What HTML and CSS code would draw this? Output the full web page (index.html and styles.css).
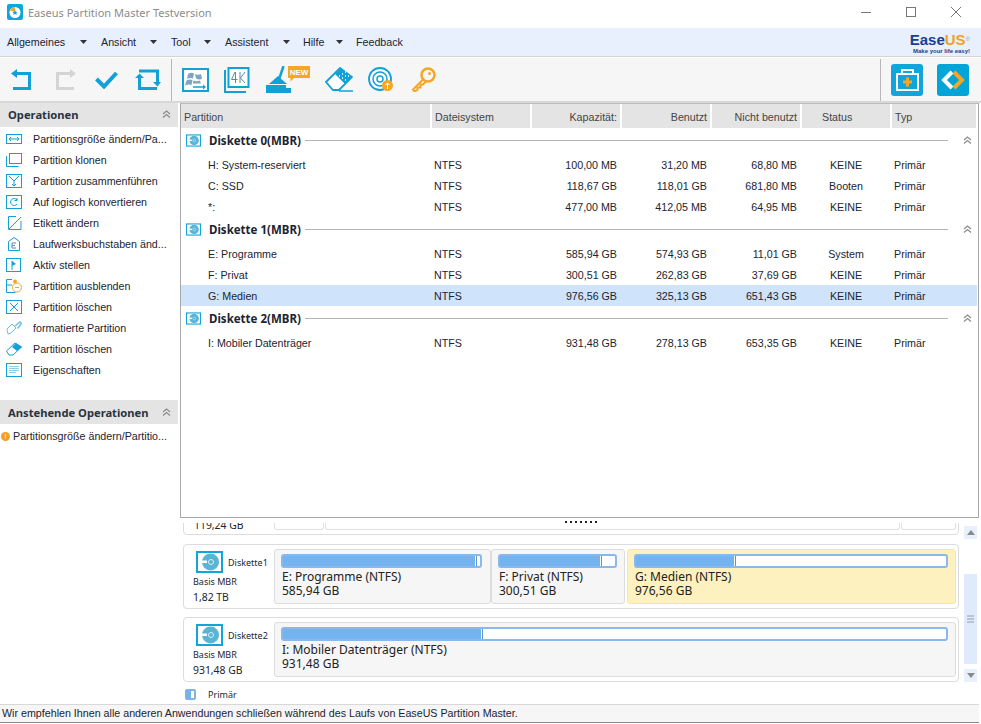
FILE: index.html
```html
<!DOCTYPE html>
<html lang="de">
    <head>
        <meta charset="UTF-8" />
        <title>Easeus Partition Master Testversion</title>
        <link rel="stylesheet" href="styles.css">
    </head>
    <body>
        <svg class="defs" width="0" height="0">
            <symbol id="disk" viewBox="0 0 27 22">
                <rect x="1" y="1" width="25" height="20" fill="#fff" stroke="#12a5dc" stroke-width="2"/>
                <circle cx="14.500" cy="11" r="8.500" fill="#5ab4d6"/>
                <rect x="2" y="9.500" width="9" height="2.500" fill="#fff"/>
                <circle cx="15" cy="11" r="2.500" fill="none" stroke="#d8eef7"/>
            </symbol>
            <symbol id="up2" viewBox="0 0 9 8">
                <path d="M1 4l3.500-3L8 4M1 7.500l3.500-3 3.500 3" fill="none" stroke="#8a8a8a" stroke-width="1.200"/>
            </symbol>
        </svg>

        <!-- Titelleiste -->
        <header class="titlebar">
            <svg class="app-icon" width="16" height="16" viewBox="0 0 16 16">
                <rect width="16" height="16" rx="2" fill="#12a5dc"/>
                <circle cx="8" cy="8.500" r="5.500" fill="#fff"/>
                <path d="M8 3a5.500 5.500 0 0 0-5 3.500L8 8z" fill="#f5a623"/>
                <path d="M8 6l.8 1.700 1.800.2-1.300 1.200.4 1.800L8 10l-1.700.9.4-1.800-1.300-1.200 1.800-.2z" fill="#12a5dc"/>
            </svg>
            <span class="app-title">Easeus Partition Master Testversion</span>
            <div class="win-buttons">
                <svg width="12" height="12" viewBox="0 0 12 12"><path d="M1 6.500h10" stroke="#777" fill="none"/></svg>
                <svg width="12" height="12" viewBox="0 0 12 12"><rect x="1.500" y="1.500" width="9" height="9" stroke="#777" fill="none"/></svg>
                <svg width="12" height="12" viewBox="0 0 12 12"><path d="M1 1l10 10M11 1L1 11" stroke="#777" fill="none"/></svg>
            </div>
        </header>

        <!-- Menue -->
        <nav class="menubar">
            <span class="menu-item m1">Allgemeines</span><i class="caret"></i>
            <span class="menu-item m2">Ansicht</span><i class="caret"></i>
            <span class="menu-item m3">Tool</span><i class="caret"></i>
            <span class="menu-item m4">Assistent</span><i class="caret short"></i>
            <span class="menu-item m5">Hilfe</span><i class="caret short"></i>
            <span class="menu-item">Feedback</span>
            <div class="logo">
                <div class="logo-name">Ease<b>US</b><sup>®</sup></div>
                <div class="logo-sub">Make your life easy!</div>
            </div>
        </nav>

        <!-- Werkzeugleiste -->
        <div class="toolbar">
            <svg class="tool" width="21" height="21" viewBox="0 0 21 21"><path d="M2 19.500h16.500V4.500H6" fill="none" stroke="#12a0d7" stroke-width="3"/><path d="M0 4.500L6 0v9z" fill="#12a0d7"/></svg>
            <svg class="tool t-redo" width="21" height="21" viewBox="0 0 21 21"><path d="M19 19.500H2.500V4.500H15" fill="none" stroke="#d4d4d4" stroke-width="3"/><path d="M21 4.500L15 0v9z" fill="#d4d4d4"/></svg>
            <svg class="tool t-apply" width="23" height="18" viewBox="0 0 23 18"><path d="M1.500 8l7.500 7.500L21.500 2" fill="none" stroke="#12a0d7" stroke-width="4"/></svg>
            <svg class="tool t-reload" width="26" height="21" viewBox="0 0 26 21"><path d="M4.500 7v12.500H22M4 2h18.500v12" fill="none" stroke="#12a0d7" stroke-width="3"/><path d="M0 9l4.500-4.500L9 9zM18 13l4.500 4.500L26 13z" fill="#12a0d7"/></svg>
            <i class="tool-sep"></i>
            <svg class="tool" width="27" height="24" viewBox="0 0 27 24"><rect x="1" y="1" width="25" height="22" fill="#fff" stroke="#12a0d7" stroke-width="2"/><path d="M6 6q3-2 6-.5l-1 5q-3-1-6 .5zM13 6q3 1.500 6 0l1 5q-3 1-6-.5zM4.500 12.500q3-1.500 6-.5l-1 5q-3-1-6.500.5zM11.500 12.500q3 1.500 6.500 0l.8 3h-8z" fill="#7fa5bf"/><path d="M11 19h11" stroke="#12a0d7" stroke-width="1.500"/><path d="M21 16.500l3 2.500-3 2.500z" fill="#12a0d7"/></svg>
            <svg class="tool t-4k" width="26" height="26" viewBox="0 0 26 26"><path d="M1 3v22h21" fill="none" stroke="#12a0d7" stroke-width="2"/><rect x="4.500" y="1" width="20" height="19" fill="#fff" stroke="#12a0d7" stroke-width="2"/><path d="M11 5l-3.500 7.500h6M11.500 5v11M16 5v11M21 5l-4.500 6 4.500 5" fill="none" stroke="#5f88a0"/></svg>
            <svg class="tool t-clean" width="45" height="27" viewBox="0 0 45 27"><path d="M0 19h20v3h5v5H0z" fill="#12a0d7"/><path d="M17.500 0l-4 12" stroke="#12a0d7" stroke-width="2.500"/><path d="M3 18l9-8 9 8z" fill="#12a0d7"/><path d="M22 0h22v12H28l-3.500 3.500V12H22z" fill="#f5a623"/><text x="33" y="9" class="new-text" text-anchor="middle">NEW</text></svg>
            <svg class="tool t-erase" width="28" height="25" viewBox="0 0 28 25"><path d="M1 15L15 1l12 9-13 13H8z" fill="#fff" stroke="#12a0d7" stroke-width="1.800"/><path d="M10 7l6-6 11 9-7 7z" fill="#12a0d7"/><path d="M14 9h1M17 7h1M20 5h1M17 11h1M20 9h1M23 9h1M20 13h1" stroke="#fff" stroke-width="1.500"/><path d="M14 24h14" stroke="#12a0d7" stroke-width="1.500"/></svg>
            <svg class="tool t-disc" width="25" height="25" viewBox="0 0 25 25"><circle cx="12" cy="12" r="11" fill="#fff" stroke="#12a0d7" stroke-width="1.800"/><circle cx="12" cy="12" r="7" fill="none" stroke="#12a0d7" stroke-width="1.500"/><circle cx="12" cy="12" r="3" fill="none" stroke="#12a0d7" stroke-width="1.500"/><circle cx="19.500" cy="18.500" r="5.500" fill="#f5a623"/><path d="M19.500 22v-6M17.500 18l2-2 2 2" stroke="#fff" fill="none"/></svg>
            <svg class="tool t-key" width="25" height="25" viewBox="0 0 25 25"><circle cx="17" cy="8" r="6.500" fill="none" stroke="#f5a623" stroke-width="2.500"/><circle cx="18.500" cy="6.500" r="1.500" fill="#f5a623"/><path d="M12.500 12L2 22.500 3.500 24.500l3-1.500v-2.500h3v-3h2.500l3-3" fill="none" stroke="#f5a623" stroke-width="2"/></svg>
            <i class="tool-sep right"></i>
            <svg class="tool" width="32" height="32" viewBox="0 0 32 32"><rect width="32" height="32" rx="3" fill="#12a5dc"/><rect x="5" y="9" width="23" height="18" fill="#fff"/><rect x="7" y="11" width="19" height="14" fill="#12a5dc"/><path d="M11 9V6h11v3" fill="none" stroke="#fff" stroke-width="2"/><path d="M16.500 13.500v9M12 18h9" stroke="#f5a623" stroke-width="3"/></svg>
            <svg class="tool t-last" width="32" height="32" viewBox="0 0 32 32"><rect width="32" height="32" rx="3" fill="#03a4d8"/><path d="M15 8l-8 8 8 8" fill="none" stroke="#fff" stroke-width="4"/><path d="M17 8l8 8-8 8" fill="none" stroke="#f5a623" stroke-width="4"/></svg>
        </div>

        <div class="main">
            <!-- Seitenleiste -->
            <aside class="sidebar">
                <div class="side-head first"><span>Operationen</span><svg width="9" height="8"><use href="#up2"/></svg></div>
                <ul class="op-list">
                    <li><svg width="16" height="14" viewBox="0 0 16 14"><rect x=".5" y="2.500" width="15" height="9" fill="none" stroke="#12a0d7"/><path d="M3 7h10M5 5L3 7l2 2M11 5l2 2-2 2" fill="none" stroke="#12a0d7"/></svg>Partitionsgröße ändern/Pa...</li>
                    <li><svg width="16" height="14" viewBox="0 0 16 14"><rect x="3.500" y=".5" width="12" height="10" fill="none" stroke="#12a0d7"/><path d="M.5 3v10.500h12" fill="none" stroke="#12a0d7"/></svg>Partition klonen</li>
                    <li><svg width="16" height="14" viewBox="0 0 16 14"><rect x=".5" y=".5" width="15" height="13" fill="none" stroke="#12a0d7"/><path d="M3 2l5 5 5-5M8 7v5M6 10l2 2 2-2" fill="none" stroke="#12a0d7"/></svg>Partition zusammenführen</li>
                    <li><svg width="16" height="14" viewBox="0 0 16 14"><rect x=".5" y=".5" width="15" height="13" fill="none" stroke="#12a0d7"/><path d="M11 9a3.500 3.500 0 1 1 0-4M11 3v2.500H8.500" fill="none" stroke="#12a0d7"/></svg>Auf logisch konvertieren</li>
                    <li><svg width="16" height="14" viewBox="0 0 16 14"><path d="M10 .5H2.500v13h12.500V5M3 13L15 1" fill="none" stroke="#12a0d7"/></svg>Etikett ändern</li>
                    <li><svg width="16" height="14" viewBox="0 0 16 14"><path d="M2.500 13.500v-9L8 .5l5.500 4v9z" fill="none" stroke="#12a0d7"/><path d="M6 6h4M6 6v5h4M6 8.500h3" fill="none" stroke="#5f88a0"/></svg>Laufwerksbuchstaben änd...</li>
                    <li><svg width="16" height="14" viewBox="0 0 16 14"><rect x=".5" y=".5" width="14" height="13" fill="none" stroke="#12a0d7"/><path d="M6 3v9" stroke="#12a0d7"/><path d="M6 3l4 3-4 2z" fill="#12a0d7"/></svg>Aktiv stellen</li>
                    <li><svg width="16" height="14" viewBox="0 0 16 14"><path d="M6 .5H.5v13h9M.5 6H6" fill="none" stroke="#12a0d7"/><circle cx="11" cy="8.500" r="4.500" fill="#fff" stroke="#f5a623"/><path d="M9 8.500h4" stroke="#f5a623"/><circle cx="9" cy="2.500" r="2" fill="#f5a623"/></svg>Partition ausblenden</li>
                    <li><svg width="16" height="14" viewBox="0 0 16 14"><rect x=".5" y=".5" width="15" height="13" fill="none" stroke="#12a0d7"/><path d="M4 3l8 8M12 3l-8 8" stroke="#12a0d7"/></svg>Partition löschen</li>
                    <li><svg width="16" height="14" viewBox="0 0 16 14"><path d="M1 8l5-5 4 4-5 5-3 1z" fill="#fff" stroke="#6bc3e4"/><path d="M9 5l5-4 1.500 1.500-4 5" fill="none" stroke="#6bc3e4" stroke-width="1.500"/></svg>formatierte Partition</li>
                    <li><svg width="16" height="14" viewBox="0 0 16 14"><path d="M.5 9L9 1l6.500 4L7 13H3z" fill="#fff" stroke="#12a0d7"/><path d="M6 5l4-4 6 4-5 4z" fill="#12a0d7"/></svg>Partition löschen</li>
                    <li><svg width="16" height="14" viewBox="0 0 16 14"><rect x=".5" y=".5" width="15" height="13" fill="none" stroke="#12a0d7"/><path d="M3 3.500h10M3 5.500h10M3 7.500h10M3 9.500h7" stroke="#8ccfe9"/></svg>Eigenschaften</li>
                </ul>
                <div class="side-head pending"><span>Anstehende Operationen</span><svg width="9" height="8"><use href="#up2"/></svg></div>
                <div class="pending-row"><i class="warn">!</i>Partitionsgröße ändern/Partitio...</div>
            </aside>

            <!-- Partitionstabelle -->
            <section class="table-panel">
                <table class="part-table">
                    <colgroup>
                        <col class="col-name"><col class="col-fs"><col class="col-num"><col class="col-num"><col class="col-num"><col class="col-num"><col>
                    </colgroup>
                    <thead>
                        <tr>
                            <th>Partition</th><th>Dateisystem</th><th class="num">Kapazität:</th><th class="num">Benutzt</th><th class="num">Nicht benutzt</th><th class="status">Status</th><th>Typ</th>
                        </tr>
                    </thead>
                    <tbody>
                        <tr class="group"><td colspan="7"><div class="group-line"><svg width="15" height="13"><use href="#disk"/></svg><b>Diskette 0(MBR)</b><hr><svg class="fold" width="9" height="8"><use href="#up2"/></svg></div></td></tr>
                        <tr><td class="name">H: System-reserviert</td><td>NTFS</td><td class="num">100,00 MB</td><td class="num">31,20 MB</td><td class="num">68,80 MB</td><td class="center">KEINE</td><td>Primär</td></tr>
                        <tr><td class="name">C: SSD</td><td>NTFS</td><td class="num">118,67 GB</td><td class="num">118,01 GB</td><td class="num">681,80 MB</td><td class="center">Booten</td><td>Primär</td></tr>
                        <tr><td class="name">*:</td><td>NTFS</td><td class="num">477,00 MB</td><td class="num">412,05 MB</td><td class="num">64,95 MB</td><td class="center">KEINE</td><td>Primär</td></tr>
                        <tr class="group"><td colspan="7"><div class="group-line"><svg width="15" height="13"><use href="#disk"/></svg><b>Diskette 1(MBR)</b><hr><svg class="fold" width="9" height="8"><use href="#up2"/></svg></div></td></tr>
                        <tr><td class="name">E: Programme</td><td>NTFS</td><td class="num">585,94 GB</td><td class="num">574,93 GB</td><td class="num">11,01 GB</td><td class="center">System</td><td>Primär</td></tr>
                        <tr><td class="name">F: Privat</td><td>NTFS</td><td class="num">300,51 GB</td><td class="num">262,83 GB</td><td class="num">37,69 GB</td><td class="center">KEINE</td><td>Primär</td></tr>
                        <tr class="selected"><td class="name">G: Medien</td><td>NTFS</td><td class="num">976,56 GB</td><td class="num">325,13 GB</td><td class="num">651,43 GB</td><td class="center">KEINE</td><td>Primär</td></tr>
                        <tr class="group"><td colspan="7"><div class="group-line"><svg width="15" height="13"><use href="#disk"/></svg><b>Diskette 2(MBR)</b><hr><svg class="fold" width="9" height="8"><use href="#up2"/></svg></div></td></tr>
                        <tr><td class="name">I: Mobiler Datenträger</td><td>NTFS</td><td class="num">931,48 GB</td><td class="num">278,13 GB</td><td class="num">653,35 GB</td><td class="center">KEINE</td><td>Primär</td></tr>
                    </tbody>
                </table>
            </section>
        </div>

        <!-- Datentraeger-Karte -->
        <section class="disk-map">
            <div class="map-scroll">
                <div class="disk-card cut">
                    <div class="disk-info"><div class="cut-size">119,24 GB</div></div>
                    <div class="cut-a"></div>
                    <div class="cut-b"></div>
                    <div class="cut-c"></div>
                </div>
                <div class="disk-card">
                    <div class="disk-info">
                        <div class="disk-title"><svg width="27" height="22"><use href="#disk"/></svg><span>Diskette1</span></div>
                        <div class="disk-type">Basis MBR</div>
                        <div class="disk-size">1,82 TB</div>
                    </div>
                    <div class="vol v-e"><div class="bar"><i class="fill f-e"></i></div><div class="vol-text">E: Programme (NTFS)</div><div class="vol-text">585,94 GB</div></div>
                    <div class="vol v-f"><div class="bar"><i class="fill f-f"></i></div><div class="vol-text">F: Privat (NTFS)</div><div class="vol-text">300,51 GB</div></div>
                    <div class="vol v-g"><div class="bar"><i class="fill f-g"></i></div><div class="vol-text">G: Medien (NTFS)</div><div class="vol-text">976,56 GB</div></div>
                </div>
                <div class="disk-card">
                    <div class="disk-info">
                        <div class="disk-title"><svg width="27" height="22"><use href="#disk"/></svg><span>Diskette2</span></div>
                        <div class="disk-type">Basis MBR</div>
                        <div class="disk-size">931,48 GB</div>
                    </div>
                    <div class="vol v-i"><div class="bar"><i class="fill f-i"></i></div><div class="vol-text">I: Mobiler Datenträger (NTFS)</div><div class="vol-text">931,48 GB</div></div>
                </div>
                <div class="legend"><i class="legend-box"></i>Primär</div>
            </div>
            <div class="scrollbar">
                <div class="sb-btn"><i class="sb-up"></i></div>
                <div class="sb-thumb"><i></i><i></i><i></i></div>
                <div class="sb-btn"><i class="sb-down"></i></div>
            </div>
            <div class="grip"></div>
        </section>

        <footer class="statusbar">Wir empfehlen Ihnen alle anderen Anwendungen schließen während des Laufs von EaseUS Partition Master.</footer>
    </body>
</html>
```

FILE: styles.css
```css
* {
    box-sizing: border-box;
}

body {
    margin: 0;
    height: 724px;
    overflow: hidden;
    background: #fff;
    color: #1c2430;
    font-family: "Liberation Sans", sans-serif;
    font-size: 10.7px;
}

.defs {
    display: block;
    height: 0;
}

/* Titelleiste */
.titlebar {
    display: flex;
    align-items: center;
    height: 28px;
    padding: 0 0 4px 7px;
}

.app-title {
    margin-left: 5px;
    font-family: "Noto Sans", sans-serif;
    font-size: 11px;
    color: #8c8c8c;
}

.win-buttons {
    display: flex;
    gap: 33px;
    margin-left: auto;
    margin-right: 19px;
}

/* Menue */
.menubar {
    display: flex;
    align-items: center;
    height: 29px;
    padding-left: 7px;
    background: #e8f0fd;
    border-bottom: 1px solid #d4d4d4;
}

.menu-item {
    flex: none;
}

.caret {
    flex: none;
    width: 7px;
    height: 4px;
    margin-right: 14px;
    background: #333;
    clip-path: polygon(0 0, 100% 0, 50% 100%);
}

.caret.short {
    margin-right: 13px;
}

.m1 { width: 73px; }
.m2 { width: 49px; }
.m3 { width: 33px; }
.m4 { width: 58px; }
.m5 { width: 33px; }

.logo {
    margin: 2px 11px 0 auto;
    text-align: right;
}

.logo-name {
    font-size: 15px;
    font-weight: bold;
    line-height: 15px;
    color: #1b3d8f;
}

.logo-name b {
    color: #f5a01e;
}

.logo-name sup {
    font-size: 6px;
    font-weight: normal;
    vertical-align: top;
    color: #8aa;
}

.logo-sub {
    font-size: 6px;
    line-height: 8px;
    font-weight: bold;
    color: #1b3d8f;
}

/* Werkzeugleiste */
.toolbar {
    display: flex;
    align-items: center;
    height: 46px;
    padding-left: 11px;
    background: #f6f6f6;
    border-top: 1px solid #fff;
    border-bottom: 2px solid #d8d8d8;
}

.tool {
    flex: none;
}

.t-redo { margin-left: 23px; }
.t-apply { margin-left: 19px; }
.t-reload { margin-left: 17px; }
.t-4k { margin-left: 15px; }
.t-clean { margin-left: 16px; }
.t-erase { margin-left: 14px; }
.t-disc { margin-left: 15px; }
.t-key { margin-left: 18px; }
.t-last { margin-left: 14px; margin-right: 12px; }

.tool-sep {
    width: 1px;
    height: 42px;
    margin: 0 10px;
    background: #b8b8b8;
}

.tool-sep.right {
    margin: 0 10px 0 auto;
}

.new-text {
    font-size: 8px;
    font-weight: bold;
    fill: #fff;
}

/* Hauptbereich */
.main {
    display: flex;
    height: 416px;
}

.sidebar {
    width: 180px;
    flex: none;
}

.side-head {
    display: flex;
    align-items: center;
    justify-content: space-between;
    width: 178px;
    height: 24px;
    padding: 0 7px 0 8px;
    background: #e4e4e4;
    font-family: "Noto Sans", sans-serif;
    font-size: 11.200px;
    font-weight: bold;
    color: #2a3340;
}

.side-head.first {
    padding-bottom: 2px;
}

.op-list {
    list-style: none;
    margin: 0;
    padding: 1px 0 0;
}

.op-list li {
    display: flex;
    align-items: center;
    gap: 11px;
    height: 21px;
    padding-left: 6px;
    white-space: nowrap;
}

.side-head.pending {
    margin-top: 20px;
}

.pending-row {
    display: flex;
    align-items: center;
    height: 24px;
    padding-left: 1px;
    white-space: nowrap;
}

.warn {
    flex: none;
    width: 9px;
    height: 9px;
    margin-right: 3px;
    border-radius: 50%;
    background: #f5a01e;
    color: #fff;
    font-style: normal;
    font-size: 7px;
    line-height: 9px;
    text-align: center;
}

/* Partitionstabelle */
.table-panel {
    flex: 1;
    margin: 0 2px 1px 0;
    border: 1px solid #a8a8a8;
    border-top-color: #bbb;
}

.part-table {
    width: 100%;
    table-layout: fixed;
    border-collapse: collapse;
}

.col-name { width: 250px; }
.col-fs { width: 100px; }
.col-num { width: 90px; }

.part-table th {
    height: 24px;
    padding: 1px 3px 0;
    background: #e4e4e4;
    border-right: 2px solid #fff;
    font-weight: normal;
    text-align: left;
    color: #444;
}

.part-table td {
    height: 21px;
    padding: 0 3px;
    white-space: nowrap;
}

.part-table th.num {
    text-align: right;
}

.part-table td.num {
    padding-right: 4px;
    text-align: right;
}

.part-table th.status {
    padding-left: 20px;
}

.part-table .center {
    text-align: center;
}

.part-table td.name {
    padding-left: 27px;
}

.part-table .group td {
    height: 26px;
    padding: 0 5px 2px;
}

.group-line {
    display: flex;
    align-items: center;
    gap: 8px;
}

.group-line b {
    font-family: "Noto Sans", sans-serif;
    font-size: 11.500px;
}

.group-line hr {
    flex: 1;
    margin: 0 0 0 -4px;
    border: none;
    border-top: 1px solid #b4b4b4;
}

.group-line .fold {
    margin: 0 0 0 7px;
}

.selected td {
    background: #cfe3fb;
}

/* Datentraeger-Karte */
.disk-map {
    position: relative;
    display: flex;
    height: 185px;
    overflow: hidden;
}

.map-scroll {
    width: 959px;
    padding-left: 183px;
}

.disk-card {
    display: flex;
    height: 65px;
    margin-bottom: 8px;
    padding: 4px 2px 4px 4px;
    border: 1px solid #dcdcdc;
    border-radius: 4px;
}

/* von oben abgeschnittene Karte */
.disk-card.cut {
    height: 24px;
    margin-top: -8px;
    margin-bottom: 9px;
    padding: 0 2px 4px 4px;
    clip-path: inset(12px 0 0 0);
}

.cut-size {
    margin-top: 6px;
    padding-left: 1px;
    font-family: "Noto Sans", sans-serif;
    font-size: 10.400px;
}

.cut-a, .cut-b, .cut-c {
    border: 1px solid #e0e0e0;
    border-top: none;
    border-radius: 0 0 3px 3px;
}

.cut-a { width: 50px; }
.cut-b { flex: 1; margin-left: 1px; }
.cut-c { width: 55px; margin-left: 1px; }

.disk-info {
    width: 86px;
    flex: none;
    padding-left: 5px;
    font-family: "Noto Sans", sans-serif;
    font-size: 9px;
}

.disk-title {
    display: flex;
    align-items: center;
    gap: 5px;
    height: 22px;
    margin: 2px 0 0 3px;
}

.disk-type {
    margin-top: 2px;
    line-height: 14px;
}

.disk-size {
    font-size: 10.400px;
    line-height: 16px;
}

.vol {
    height: 55px;
    padding: 4px 7px 0 6px;
    border: 1px solid #dcdcdc;
    border-radius: 3px;
    background: #f6f6f6;
    font-family: "Noto Sans", sans-serif;
    font-size: 12px;
    line-height: 14px;
    color: #222;
}

.vol-text {
    margin-left: 1px;
}

.v-e { width: 217px; padding-right: 8px; }
.v-f { width: 134px; }
.v-g { flex: 1; margin-left: 2px; background: #fdf1c0; border-color: #f5e6a8; }
.v-i { flex: 1; }

.bar {
    height: 14px;
    margin-bottom: 2px;
    background: #fff;
    border: 2px solid #8ab8ea;
    border-radius: 3px;
}

.fill {
    display: block;
    height: 100%;
    background: #72b3f0;
    border-right: 1px solid #fff;
    box-shadow: 1px 0 0 #5b96d2;
}

.f-e { width: 98%; }
.f-f { width: 88%; }
.f-g { width: 32%; }
.f-i { width: 30%; }

.legend {
    display: flex;
    align-items: center;
    gap: 12px;
    height: 20px;
    margin-top: -6px;
    margin-left: 2px;
    font-family: "Noto Sans", sans-serif;
    font-size: 9px;
}

.legend-box {
    width: 11px;
    height: 11px;
    border: 2px solid #80b2e6;
    border-radius: 2px;
    background: linear-gradient(90deg, #72b3f0 60%, #fff 60%);
}

.scrollbar {
    display: flex;
    flex-direction: column;
    width: 13px;
    height: 156px;
    margin: 7px 0 0 5px;
}

.sb-btn {
    display: flex;
    align-items: center;
    justify-content: center;
    height: 13px;
    background: #e8f0fd;
}

.sb-up, .sb-down {
    width: 0;
    height: 0;
    border-left: 4px solid transparent;
    border-right: 4px solid transparent;
}

.sb-up { border-bottom: 5px solid #8a8a8a; }
.sb-down { border-top: 5px solid #8a8a8a; }

.sb-thumb {
    display: flex;
    flex-direction: column;
    flex: 1;
    align-items: center;
    justify-content: center;
    gap: 1px;
    margin: 35px 0 5px;
    background: #dfeafc;
}

.sb-thumb i {
    width: 7px;
    height: 2px;
    background: #b8c4d4;
}

/* Griff ueber der Karte */
.grip {
    position: absolute;
    left: 565px;
    top: 2px;
    width: 33px;
    height: 2px;
    background: repeating-linear-gradient(90deg, #222 0 2px, transparent 2px 5px);
}

/* Statusleiste */
.statusbar {
    height: 19px;
    margin-right: 2px;
    padding-left: 2px;
    border-top: 1px solid #d8d8d8;
    border-bottom: 1px solid #888;
    background: #f6f6f6;
    line-height: 17px;
}
```
